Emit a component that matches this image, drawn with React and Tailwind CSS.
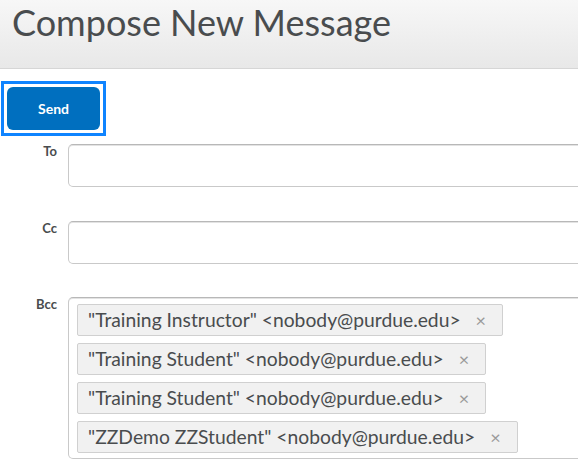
const recipients = [
  '"Training Instructor" <nobody@purdue.edu>',
  '"Training Student" <nobody@purdue.edu>',
  '"Training Student" <nobody@purdue.edu>',
  '"ZZDemo ZZStudent" <nobody@purdue.edu>',
];

const Field = ({ label, children }) => (
  <div className="flex items-start">
    <div className="w-[57px] shrink-0 text-right text-[13px] leading-[15px] font-bold text-[#494c4e]">
      {label}
    </div>
    <div className="ml-[11px] flex-1">{children}</div>
  </div>
);

export default function App() {
  return (
    <div className="w-[578px] h-[466px] overflow-hidden bg-white font-['Lato',sans-serif] text-[#494c4e]">
      <header className="h-[69px] border-b border-[#d6d6d6] bg-gradient-to-b from-[#f7f7f7] to-[#e8e8e8] pl-[12px]">
        <h1 className="text-[36px] leading-[44px] font-normal text-[#494c4e]">Compose New Message</h1>
      </header>

      <div className="w-[640px]">
        <div className="mt-[12px] ml-[1px] inline-block border-[3px] border-[#0f84ff] p-[3px]">
          <button className="block w-[93px] h-[43px] rounded-[6px] bg-[#006fbf] text-[14px] font-bold text-white">
            Send
          </button>
        </div>

        <div className="mt-[8px] flex flex-col gap-[34px]">
          <Field label="To">
            <div className="h-[43px] rounded-[5px] border border-[#c9c9c9] border-t-[#b8b8b8] bg-white shadow-[inset_0_1px_0_#e3e3e3]" />
          </Field>

          <Field label="Cc">
            <div className="h-[43px] rounded-[5px] border border-[#c9c9c9] border-t-[#b8b8b8] bg-white shadow-[inset_0_1px_0_#e3e3e3]" />
          </Field>

          <div className="-mt-px">
            <Field label="Bcc">
              <div className="rounded-[5px] border border-[#c9c9c9] border-t-[#b8b8b8] bg-white shadow-[inset_0_1px_0_#e3e3e3] pl-[8px] pt-[6px] pb-[5px] flex flex-col items-start gap-[7px]">
                {recipients.map((r, i) => (
                  <div
                    key={i}
                    className="h-[32px] flex items-center rounded-[2px] border border-[#d0d0d0] bg-[#f1f1f1] pl-[10px] pr-[16px] text-[19.3px] leading-[24px] text-[#494c4e]"
                  >
                    <span>{r}</span>
                    <span className="ml-[15px] text-[18px] text-[#9a9a9a]">×</span>
                  </div>
                ))}
              </div>
            </Field>
          </div>
        </div>
      </div>
    </div>
  );
}
